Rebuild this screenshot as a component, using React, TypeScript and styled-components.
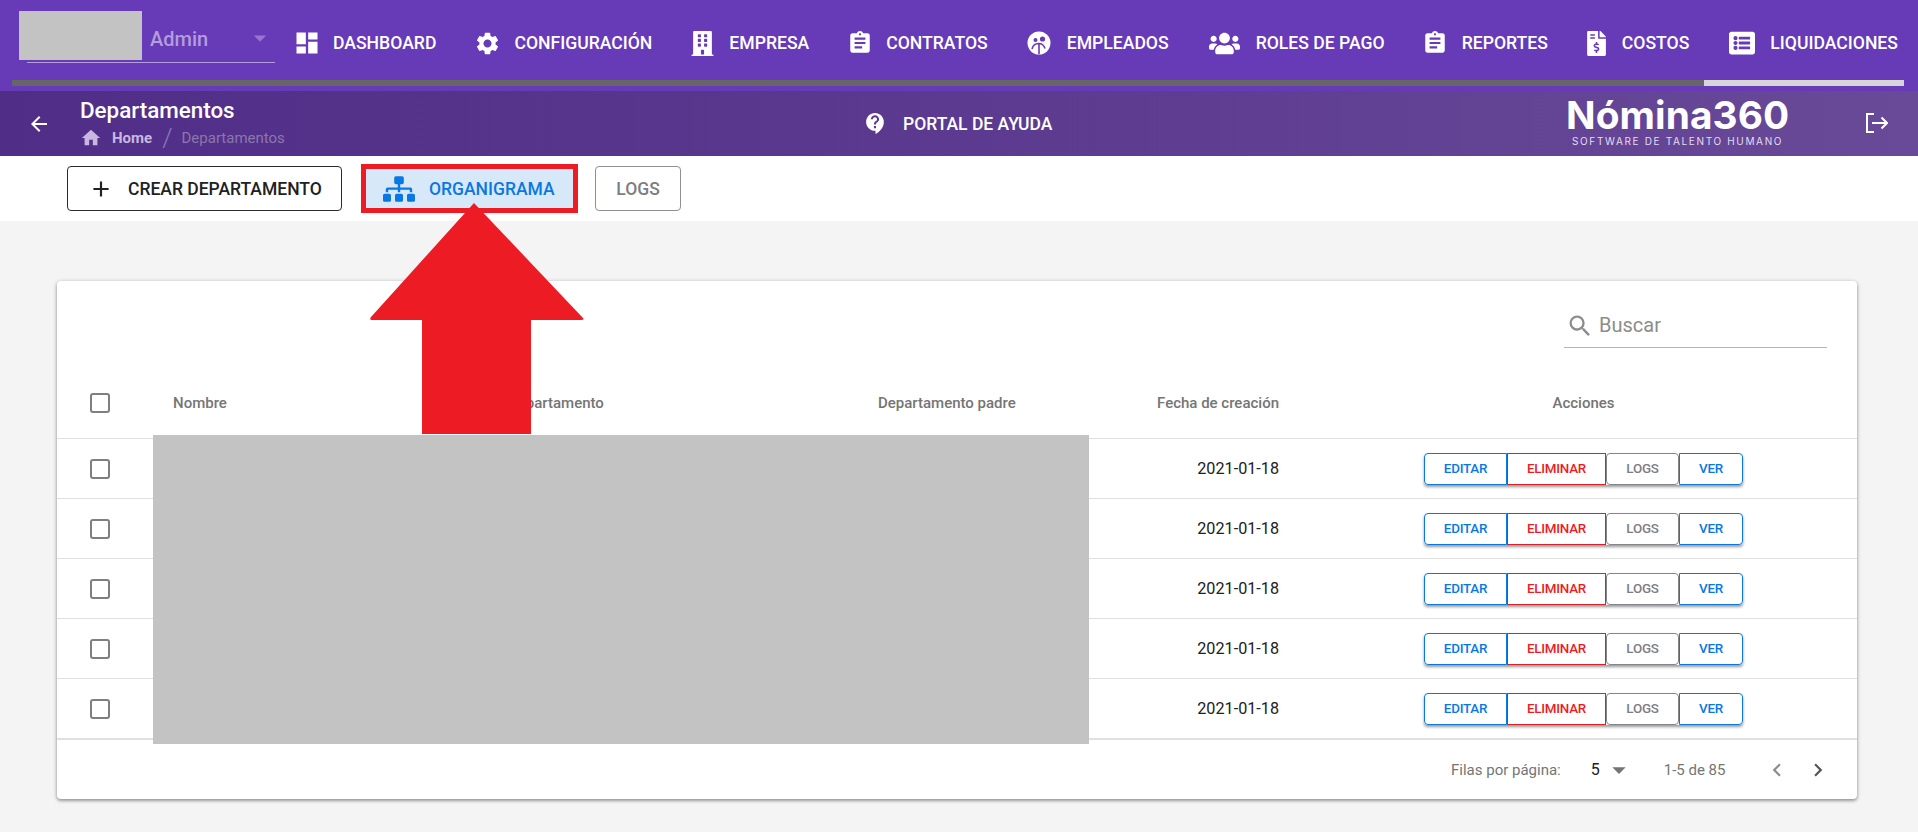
import { createGlobalStyle } from 'styled-components';
import styled from 'styled-components';
import {
  MdDashboard, MdSettings, MdAssignment, MdContactSupport, MdArrowBack, MdHome,
  MdAdd, MdSearch, MdChevronLeft, MdChevronRight, MdArrowDropDown,
} from 'react-icons/md';
import { FaBuilding, FaUsers, FaFileInvoiceDollar, FaSitemap, FaListAlt } from 'react-icons/fa';

const GlobalStyle = createGlobalStyle`
  html, body { margin: 0; padding: 0; background: #f4f4f4; }
  body { font-family: Roboto, "Liberation Sans", sans-serif; width: 1918px; height: 832px; overflow: hidden; }
  * { box-sizing: border-box; }
`;

const TopBar = styled.header`
  height: 91px;
  background: #673ab7;
  padding: 11px 14px 5px 12px;
  display: flex;
  flex-direction: column;
`;

const TopRow = styled.div`
  display: flex;
  height: 69px;
  padding-left: 7px;
`;

const UserBox = styled.div`
  width: 256px;
  height: 52px;
  position: relative;
  display: flex;
  margin-right: 21px;
`;

const Avatar = styled.div`
  width: 123px;
  height: 49px;
  background: #c3c3c3;
`;

const UserName = styled.span`
  color: #b39ddb;
  font-size: 20px;
  font-weight: 500;
  margin: 16px 0 0 8px;
  line-height: 24px;
`;

const UserCaret = styled.span`
  position: absolute;
  left: 226px;
  top: 12px;
  color: #9575cd;
  font-size: 30px;
  line-height: 0;
  svg { display: block; }
`;

const UserLine = styled.div`
  position: absolute;
  left: 8px;
  bottom: 0;
  width: 248px;
  height: 1px;
  background: #b39ddb;
`;

const Nav = styled.nav`
  display: flex;
  gap: 40px;
  height: 62px;
  align-items: center;
  margin-top: 1px;
`;

const NavItem = styled.a`
  display: flex;
  align-items: center;
  gap: 16px;
  color: #fff;
  font-size: 17.6px;
  font-weight: 500;
  text-transform: uppercase;
  white-space: nowrap;
`;

const NavIcon = styled.span<{ $w: number }>`
  width: ${({ $w }) => $w}px;
  display: flex;
  justify-content: center;
  svg { display: block; flex: none; }
`;

const TabTrack = styled.div`
  height: 6px;
  background: #666;
  display: flex;
  justify-content: flex-end;
`;

const TabIndicator = styled.div`
  width: 200px;
  background: #d6d6d6;
`;

const SubBar = styled.div`
  height: 65px;
  background: linear-gradient(90deg, #502d87 0%, #5c3a8f 50%, #684a98 100%);
  display: flex;
  align-items: center;
  color: #fff;
`;

const BackButton = styled.span`
  margin-left: 27px;
  width: 53px;
  font-size: 24px;
  svg { display: block; }
`;

const TitleBlock = styled.div`
  width: 783px;
  display: flex;
  flex-direction: column;
`;

const PageTitle = styled.div`
  font-size: 22.4px;
  font-weight: 500;
  line-height: 26px;
  margin-top: -1px;
`;

const Crumbs = styled.div`
  display: flex;
  align-items: center;
  font-size: 15px;
  line-height: 20px;
  margin-top: 4px;
  svg { display: block; }
`;

const CrumbHome = styled.span`
  display: flex;
  align-items: center;
  gap: 10px;
  color: #c8b8e0;
  font-weight: 700;
`;

const CrumbSep = styled.span`
  color: #8d78b0;
  font-size: 26px;
  margin: 0 9px 0 10px;
  font-weight: 300;
`;

const CrumbCurrent = styled.span`
  color: #8a77ad;
`;

const HelpLink = styled.a`
  width: 703px;
  display: flex;
  align-items: center;
  gap: 15px;
  font-size: 17.5px;
  font-weight: 500;
  svg { display: block; }
`;

const Logo = styled.div`
  width: 300px;
  display: flex;
  flex-direction: column;
  margin-top: -6px;
`;

const LogoMark = styled.div`
  font-family: Inter, "Open Sans", sans-serif;
  font-size: 38.8px;
  font-weight: 700;
  line-height: 40px;
  letter-spacing: 0.1px;
`;

const LogoTag = styled.div`
  font-family: Inter, "Open Sans", sans-serif;
  font-size: 10px;
  line-height: 12px;
  letter-spacing: 1.65px;
  margin-left: 6px;
  color: #e4dcf0;
`;

const LogoutIcon = styled.svg`
  margin-top: -2px;
  fill: none;
  stroke: #fff;
  stroke-width: 2;
`;

const Toolbar = styled.div`
  height: 65px;
  background: #fff;
  display: flex;
  align-items: center;
  padding-left: 67px;
  position: relative;
`;

const ToolButton = styled.button<{ $tone: 'dark' | 'blue' | 'gray' }>`
  height: 45px;
  display: flex;
  align-items: center;
  font-family: inherit;
  font-size: 17.5px;
  font-weight: 500;
  text-transform: uppercase;
  border-radius: 4px;
  background: ${({ $tone }) => ($tone === 'blue' ? '#d7e9f9' : '#fff')};
  color: ${({ $tone }) => ({ dark: '#212121', blue: '#0a78e2', gray: '#7d7d86' }[$tone])};
  border: ${({ $tone }) => ($tone === 'blue' ? '5px solid #ed1c24' : $tone === 'dark' ? '1px solid #2b2b2b' : '1px solid #8f8f96')};
  svg { display: block; flex: none; }
`;

const CreateButton = styled(ToolButton)`
  width: 275px;
  padding: 0 0 0 20px;
  gap: 14px;
  margin-right: 19px;
`;

const ChartButton = styled(ToolButton)`
  width: 217px;
  height: 49px;
  border-radius: 0;
  padding: 0 0 0 17px;
  gap: 14px;
  margin-right: 17px;
`;

const LogsButton = styled(ToolButton)`
  width: 86px;
  justify-content: center;
  padding: 0;
`;

const RedArrow = styled.svg`
  position: absolute;
  left: 369px;
  top: 202px;
  z-index: 5;
`;

const Card = styled.section`
  position: relative;
  width: 1800px;
  height: 518px;
  margin: 60px 0 0 57px;
  background: #fff;
  border-radius: 4px;
  box-shadow: 0 1px 4px rgba(0, 0, 0, 0.3), 0 2px 3px rgba(0, 0, 0, 0.2);
  display: flex;
  flex-direction: column;
`;

const SearchRow = styled.div`
  height: 95px;
  padding: 0 30px 0 0;
  display: flex;
  justify-content: flex-end;
  align-items: flex-start;
`;

const SearchField = styled.div`
  width: 263px;
  height: 68px;
  margin-top: -1px;
  padding: 33px 0 0 2px;
  border-bottom: 1px solid #b5b5b5;
  display: flex;
  align-items: flex-start;
  gap: 5px;
  color: #8c8c8c;
  font-size: 20px;
  line-height: 24px;
  svg { display: block; margin-top: -1px; }
`;

const Row = styled.div<{ $head?: boolean }>`
  display: grid;
  grid-template-columns: 116px 335px 370px 252px 149px 1fr;
  align-items: center;
  height: ${({ $head }) => ($head ? '63px' : '60px')};
  padding-bottom: ${({ $head }) => ($head ? '9px' : '0')};
  border-bottom: 1px solid #e0e0e0;
  font-size: ${({ $head }) => ($head ? '15px' : '16.2px')};
  font-weight: ${({ $head }) => ($head ? 500 : 400)};
  color: ${({ $head }) => ($head ? '#757575' : '#212121')};
`;

const CheckCell = styled.div`
  padding-left: 33px;
`;

const CheckBox = styled.span`
  display: block;
  width: 20px;
  height: 20px;
  border: 2px solid #7f7f7f;
  border-radius: 3px;
`;

const DateCell = styled.div`
  text-align: right;
`;

const ActionsCell = styled.div<{ $center?: boolean }>`
  margin-left: 145px;
  width: 319px;
  display: flex;
  justify-content: ${({ $center }) => ($center ? 'center' : 'flex-start')};
`;

const ActionGroup = styled.div`
  display: flex;
  height: 32px;
  border-radius: 4px;
  box-shadow: 0 2px 3px rgba(0, 0, 0, 0.4);
`;

const ActionButton = styled.button<{ $w: number; $tone: 'blue' | 'red' | 'gray'; $edge?: 'start' | 'end' }>`
  width: ${({ $w }) => $w}px;
  background: #fff;
  font-family: inherit;
  font-size: 13.4px;
  font-weight: 500;
  letter-spacing: -0.25px;
  text-transform: uppercase;
  padding: 0;
  color: ${({ $tone }) => ({ blue: '#0a78e2', red: '#ed1c24', gray: '#7d7d86' }[$tone])};
  border: 1px solid ${({ $tone }) => ({ blue: '#0a78e2', red: '#d9232b', gray: '#85858c' }[$tone])};
  border-radius: ${({ $edge, $tone }) =>
    $edge === 'start' ? '4px 0 0 4px' : $edge === 'end' ? '0 4px 4px 0' : $tone === 'gray' ? '4px' : '0'};
`;

const Pager = styled.div`
  flex: 1;
  display: flex;
  align-items: center;
  border-top: 1px solid #e0e0e0;
  font-size: 15px;
  color: #757575;
  padding-left: 1394px;
  svg { display: block; flex: none; }
`;

const PagerSize = styled.span`
  color: #212121;
  font-size: 16px;
  margin-left: 30px;
  width: 12px;
`;

const PagerCaret = styled.span`
  color: #757575;
  margin-right: 29px;
  font-size: 32px;
  width: 32px;
`;

const PagerNav = styled.span<{ $dim?: boolean }>`
  color: ${({ $dim }) => ($dim ? '#8c8c8c' : '#555')};
  font-size: 26px;
  margin-left: ${({ $dim }) => ($dim ? '39px' : '15px')};
`;

const Mask = styled.div`
  position: absolute;
  left: 96px;
  top: 154px;
  width: 936px;
  height: 309px;
  background: #c3c3c3;
`;

const FaceIcon = () => (
  <svg width="24" height="24" viewBox="0 0 24 24">
    <circle cx="12" cy="12" r="11.5" fill="#fff" />
    <circle cx="8.5" cy="9" r="2" fill="#673ab7" />
    <circle cx="15.5" cy="8" r="2.6" fill="#673ab7" />
    <path d="M5 18c1-4 3.5-5.5 6.5-5.5s5.500 1.500 6.500 5M12 13v10" fill="none" stroke="#673ab7" strokeWidth="1.6" />
  </svg>
);

const navItems = [
  { label: 'Dashboard', w: 21, icon: <MdDashboard size={28} /> },
  { label: 'Configuración', w: 22, icon: <MdSettings size={27} /> },
  { label: 'Empresa', w: 21, icon: <FaBuilding size={25} /> },
  { label: 'Contratos', w: 21, icon: <MdAssignment size={26} /> },
  { label: 'Empleados', w: 23, icon: <FaceIcon /> },
  { label: 'Roles de pago', w: 31, icon: <FaUsers size={31} /> },
  { label: 'Reportes', w: 21, icon: <MdAssignment size={26} /> },
  { label: 'Costos', w: 18, icon: <FaFileInvoiceDollar size={25} /> },
  { label: 'Liquidaciones', w: 25, icon: <FaListAlt size={26} /> },
];

const rows = [1, 2, 3, 4, 5];

export default function App() {
  return (
    <>
      <GlobalStyle />
      <TopBar>
        <TopRow>
          <UserBox>
            <Avatar />
            <UserName>Admin</UserName>
            <UserCaret><MdArrowDropDown /></UserCaret>
            <UserLine />
          </UserBox>
          <Nav>
            {navItems.map(item => (
              <NavItem key={item.label}>
                <NavIcon $w={item.w}>{item.icon}</NavIcon>
                {item.label}
              </NavItem>
            ))}
          </Nav>
        </TopRow>
        <TabTrack><TabIndicator /></TabTrack>
      </TopBar>

      <SubBar>
        <BackButton><MdArrowBack /></BackButton>
        <TitleBlock>
          <PageTitle>Departamentos</PageTitle>
          <Crumbs>
            <CrumbHome><MdHome size={22} />Home</CrumbHome>
            <CrumbSep>/</CrumbSep>
            <CrumbCurrent>Departamentos</CrumbCurrent>
          </Crumbs>
        </TitleBlock>
        <HelpLink><MdContactSupport size={25} />PORTAL DE AYUDA</HelpLink>
        <Logo>
          <LogoMark>Nómina360</LogoMark>
          <LogoTag>SOFTWARE DE TALENTO HUMANO</LogoTag>
        </Logo>
        <LogoutIcon width="22" height="20" viewBox="0 0 22 20">
          <path d="M8 1H1v18h7M6 10h15M15.5 4.5l5.5 5.5-5.5 5.5" />
        </LogoutIcon>
      </SubBar>

      <Toolbar>
        <CreateButton $tone="dark"><MdAdd size={26} />Crear departamento</CreateButton>
        <ChartButton $tone="blue"><FaSitemap size={32} />Organigrama</ChartButton>
        <LogsButton $tone="gray">Logs</LogsButton>
      </Toolbar>

      <RedArrow width="216" height="233" viewBox="0 0 216 233">
        <path d="M105 1 L214 116 Q216 118 212 118 L162 118 L162 232 L53 232 L53 118 L3 118 Q0 118 2 115 Z" fill="#ed1c24" />
      </RedArrow>

      <Card>
        <SearchRow>
          <SearchField><MdSearch size={28} />Buscar</SearchField>
        </SearchRow>
        <Row $head>
          <CheckCell><CheckBox /></CheckCell>
          <div>Nombre</div>
          <div>Departamento</div>
          <div>Departamento padre</div>
          <DateCell>Fecha de creación</DateCell>
          <ActionsCell $center>Acciones</ActionsCell>
        </Row>
        {rows.map(r => (
          <Row key={r}>
            <CheckCell><CheckBox /></CheckCell>
            <div />
            <div />
            <div />
            <DateCell>2021-01-18</DateCell>
            <ActionsCell>
              <ActionGroup>
                <ActionButton $w={83} $tone="blue" $edge="start">Editar</ActionButton>
                <ActionButton $w={99} $tone="red">Eliminar</ActionButton>
                <ActionButton $w={73} $tone="gray">Logs</ActionButton>
                <ActionButton $w={64} $tone="blue" $edge="end">Ver</ActionButton>
              </ActionGroup>
            </ActionsCell>
          </Row>
        ))}
        <Pager>
          Filas por página:
          <PagerSize>5</PagerSize>
          <PagerCaret><MdArrowDropDown /></PagerCaret>
          1-5 de 85
          <PagerNav $dim><MdChevronLeft /></PagerNav>
          <PagerNav><MdChevronRight /></PagerNav>
        </Pager>
        <Mask />
      </Card>
    </>
  );
}
